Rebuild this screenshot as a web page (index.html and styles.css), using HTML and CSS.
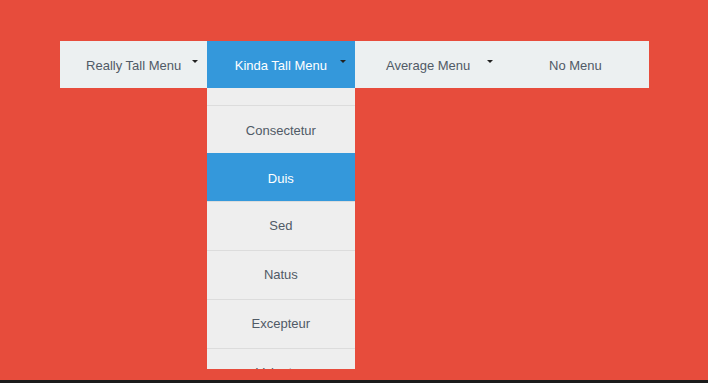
FILE: index.html
```html
<!DOCTYPE html>
<html lang="en">
<head>
    <meta charset="UTF-8">
    <meta name="viewport" content="width=device-width, initial-scale=1.0">
    <title>Dropdown Menus</title>
    <link rel="stylesheet" href="styles.css">
</head>
<body>
    <div class="page">
        <nav class="menu">
            <div class="menu-item has-caret">Really Tall Menu</div>
            <div class="menu-item has-caret active">
                Kinda Tall Menu
                <div class="dropdown">
                    <ul class="dropdown-list">
                        <li></li>
                        <li>Consectetur</li>
                        <li class="selected">Duis</li>
                        <li>Sed</li>
                        <li>Natus</li>
                        <li>Excepteur</li>
                        <li>Voluptas</li>
                    </ul>
                </div>
            </div>
            <div class="menu-item has-caret">Average Menu</div>
            <div class="menu-item">No Menu</div>
        </nav>
    </div>
    <div class="bottom-strip"></div>
</body>
</html>
```

FILE: styles.css
```css
html, body {
    height: 100%;
}

body {
    margin: 0;
    display: flex;
    flex-direction: column;
    background-color: #e74c3c;
    font-family: Arial, "Liberation Sans", sans-serif;
    font-size: 13px;
    color: #505a66;
}

.page {
    flex: 1;
    padding: 41px 0 0 60px;
}

.menu {
    display: flex;
    width: 589px;
    height: 47px;
    background-color: #ecf0f1;
}

.menu-item {
    position: relative;
    flex: 1;
    display: flex;
    align-items: center;
    justify-content: center;
    padding-top: 1px;
    cursor: pointer;
}

.menu-item.has-caret::after {
    content: "";
    position: absolute;
    top: 19px;
    right: 9px;
    border-left: 3px solid transparent;
    border-right: 3px solid transparent;
    border-top: 3px solid #222;
}

.menu-item.active {
    background-color: #3498db;
    color: #fff;
}

.dropdown {
    position: absolute;
    top: 47px;
    left: 0;
    width: 100%;
    height: 281px;
    overflow: hidden;
    background-color: #eeeeee;
    color: #505a66;
}

.dropdown-list {
    list-style: none;
    margin: -31px 0 0;
    padding: 0;
}

.dropdown-list li {
    height: 47px;
    line-height: 49px;
    text-align: center;
    border-top: 1px solid #dcdcdc;
}

.dropdown-list li:nth-child(n+4) {
    height: 48px;
    line-height: 48px;
}

.dropdown-list li.selected {
    background-color: #3498db;
    border-top-color: #3498db;
    color: #fff;
}

.bottom-strip {
    height: 3px;
    background-color: #1b1b1b;
}
```
